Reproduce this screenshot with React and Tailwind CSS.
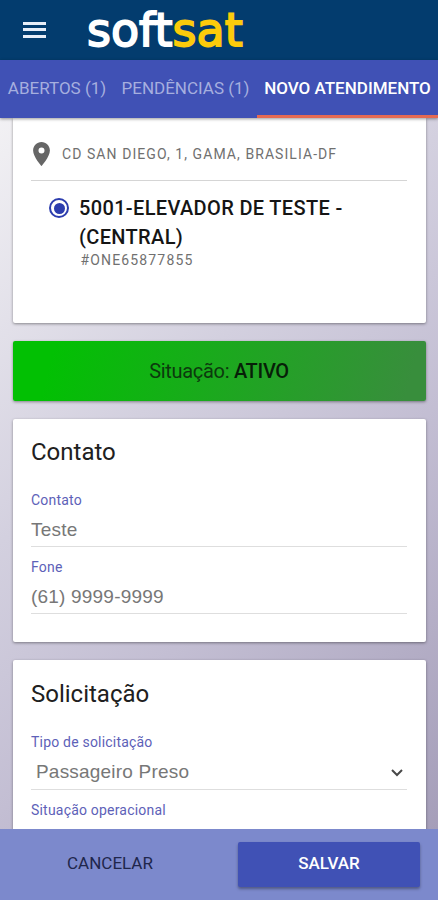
import { useState } from "react";

const tabs = [
	{ id: "abertos", label: "ABERTOS (1)", className: "w-[114px] text-[#a6afdf]" },
	{ id: "pendencias", label: "PENDÊNCIAS (1)", className: "w-[143px] text-[#a6afdf]" },
	{ id: "novo", label: "NOVO ATENDIMENTO", className: "w-[181px] font-medium text-white shadow-[inset_0_-3px_0_#e56a52]" },
];

function Header() {
	return (
		<header className="flex h-[60px] shrink-0 items-center bg-[#033c6e] pl-[23px]">
			<button type="button" aria-label="Menu" className="mb-px flex w-[23px] flex-col gap-[3.5px]">
				<span className="h-[3px] bg-[#e8eef8]"></span>
				<span className="h-[3px] bg-[#e8eef8]"></span>
				<span className="h-[3px] bg-[#e8eef8]"></span>
			</button>
			<h1 className="ml-[41px] font-['DejaVu_Sans',sans-serif] text-[46px] leading-[58px] text-white [-webkit-text-stroke:1.8px_currentColor]">
				soft<span className="text-[#fccb0b]">sat</span>
			</h1>
		</header>
	);
}

function Card({ className, children }) {
	return (
		<section className={`shrink-0 rounded-[2px] bg-white px-[18.5px] shadow-[0_1px_3px_rgba(0,0,0,0.4)] ${className}`}>
			{children}
		</section>
	);
}

function Field({ label, value, onChange }) {
	return (
		<label className="block">
			<span className="block text-[14px] leading-5 tracking-[0.2px] text-[#5d61b8]">{label}</span>
			<input
				value={value}
				onChange={(e) => onChange(e.target.value)}
				className="block h-[37px] w-full border-b border-[#dedede] pt-[3px] font-['Liberation_Sans',sans-serif] text-[19px] tracking-[0.2px] text-[#777777] outline-none"
			/>
		</label>
	);
}

export default function App() {
	const [contato, setContato] = useState("Teste");
	const [fone, setFone] = useState("(61) 9999-9999");

	return (
		<div className="flex h-[900px] w-[438px] flex-col overflow-hidden font-[Roboto,sans-serif]">
			<Header />

			{/* Tabs */}
			<nav className="z-10 flex h-[58px] shrink-0 bg-[#4051b5] shadow-[0_1px_3px_rgba(0,0,0,0.4)]">
				{tabs.map((tab) => (
					<button
						key={tab.id}
						type="button"
						className={`flex h-[58px] items-center justify-center pb-px text-[17px] whitespace-nowrap ${tab.className}`}
					>
						{tab.label}
					</button>
				))}
			</nav>

			<main className="flex min-h-0 flex-1 flex-col gap-[18px] overflow-hidden bg-[linear-gradient(137deg,#f2f1f4_0%,#d3d0df_38%,#c3bed3_62%,#a59eb9_100%)] px-[12.5px]">
				{/* Address and equipment */}
				<Card className="h-[205px] rounded-t-none">
					<div className="flex h-[63px] items-center border-b border-[#d5d5d5] pt-[9px]">
						<svg viewBox="5 2 14 20" className="ml-[2px] h-[24px] w-[17px] fill-[#666666]">
							<path d="M12 2C8.13 2 5 5.13 5 9c0 5.25 7 13 7 13s7-7.75 7-13c0-3.87-3.13-7-7-7zm0 9.5a2.5 2.5 0 0 1 0-5 2.5 2.5 0 0 1 0 5z" />
						</svg>
						<span className="ml-3 pt-px text-[14px] tracking-[1.07px] whitespace-nowrap text-[#707070]">
							CD SAN DIEGO, 1, GAMA, BRASILIA-DF
						</span>
					</div>
					<div className="flex pt-[13px] pl-[18px]">
						<span className="mt-[4px] flex size-5 shrink-0 items-center justify-center rounded-full border-2 border-[#2c3dae]">
							<span className="size-[11px] rounded-full bg-[#2c3dae]"></span>
						</span>
						<div className="ml-[10px]">
							<p className="text-[20px] leading-[29px] font-medium tracking-[0.35px] text-[#151515]">
								5001-ELEVADOR DE TESTE -<br />
								(CENTRAL)
							</p>
							<p className="ml-[1.5px] text-[14px] leading-4 tracking-[1.15px] text-[#707070]">#ONE65877855</p>
						</div>
					</div>
				</Card>

				{/* Equipment status */}
				<div className="flex h-[60px] shrink-0 items-center justify-center rounded-[2px] bg-[linear-gradient(105deg,#02c003_10%,#388e3c_95%)] text-[20px] tracking-[-0.3px] text-[#0c3a0d] shadow-[0_1px_3px_rgba(0,0,0,0.4)]">
					<p>
						Situação: <span className="font-medium text-[#071f08]">ATIVO</span>
					</p>
				</div>

				<Card className="h-[223px] pt-[17px]">
					<h2 className="text-[24px] leading-8 text-[#202020]">Contato</h2>
					<div className="mt-[22px] flex flex-col gap-[10px]">
						<Field label="Contato" value={contato} onChange={setContato} />
						<Field label="Fone" value={fone} onChange={setFone} />
					</div>
				</Card>

				<Card className="h-[240px] pt-[18px]">
					<h2 className="text-[24px] leading-8 text-[#202020]">Solicitação</h2>
					<p className="mt-[22px] text-[14px] leading-5 tracking-[0.2px] text-[#5d61b8]">Tipo de solicitação</p>
					<div className="flex h-[38px] items-center justify-between border-b border-[#dedede] pt-[4px] pr-[4px] pl-[5px]">
						<span className="font-['Liberation_Sans',sans-serif] text-[19px] tracking-[0.2px] text-[#777777]">Passageiro Preso</span>
						<svg viewBox="0 0 12 8" className="h-[8px] w-[12px] fill-none stroke-[#484848] stroke-2">
							<path d="M1 1l5 5 5-5" />
						</svg>
					</div>
					<p className="mt-[10px] text-[14px] leading-5 tracking-[0.2px] text-[#5d61b8]">Situação operacional</p>
				</Card>
			</main>

			{/* Actions */}
			<footer className="z-10 flex h-[71px] shrink-0 items-center bg-[#7c89cc] pr-[18px]">
				<button type="button" className="w-[220px] pb-[2px] text-[17px] text-[#20264b]">
					CANCELAR
				</button>
				<button
					type="button"
					className="ml-[18px] h-[45px] flex-1 rounded-[2px] bg-[#4051b5] pb-[2px] text-[17px] font-medium text-white shadow-[0_2px_3px_rgba(0,0,0,0.35)]"
				>
					SALVAR
				</button>
			</footer>
		</div>
	);
}
